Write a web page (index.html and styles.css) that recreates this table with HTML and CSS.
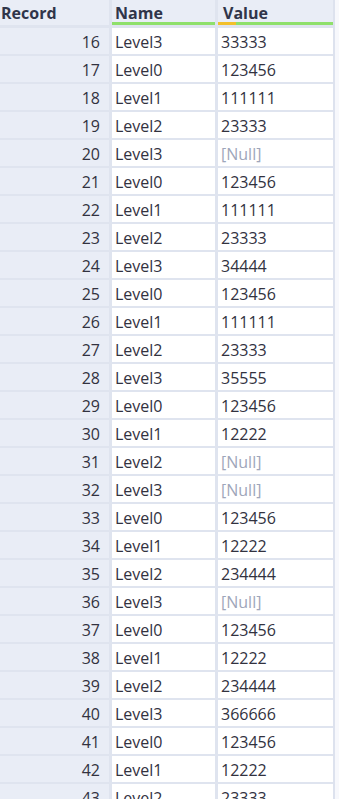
FILE: index.html
```html
<!DOCTYPE html>
<html>
<head>
<meta charset="utf-8">
<link rel="stylesheet" href="styles.css">
</head>
<body>
<div class="page">
  <div class="grid">
    <div class="hd rec">Record</div>
    <div class="hd name">Name</div>
    <div class="hd val">Value</div>

    <div class="c rec">16</div><div class="c">Level3</div><div class="c">33333</div>
    <div class="c rec">17</div><div class="c">Level0</div><div class="c">123456</div>
    <div class="c rec">18</div><div class="c">Level1</div><div class="c">111111</div>
    <div class="c rec">19</div><div class="c">Level2</div><div class="c">23333</div>
    <div class="c rec">20</div><div class="c">Level3</div><div class="c null">[Null]</div>
    <div class="c rec">21</div><div class="c">Level0</div><div class="c">123456</div>
    <div class="c rec">22</div><div class="c">Level1</div><div class="c">111111</div>
    <div class="c rec">23</div><div class="c">Level2</div><div class="c">23333</div>
    <div class="c rec">24</div><div class="c">Level3</div><div class="c">34444</div>
    <div class="c rec">25</div><div class="c">Level0</div><div class="c">123456</div>
    <div class="c rec">26</div><div class="c">Level1</div><div class="c">111111</div>
    <div class="c rec">27</div><div class="c">Level2</div><div class="c">23333</div>
    <div class="c rec">28</div><div class="c">Level3</div><div class="c">35555</div>
    <div class="c rec">29</div><div class="c">Level0</div><div class="c">123456</div>
    <div class="c rec">30</div><div class="c">Level1</div><div class="c">12222</div>
    <div class="c rec">31</div><div class="c">Level2</div><div class="c null">[Null]</div>
    <div class="c rec">32</div><div class="c">Level3</div><div class="c null">[Null]</div>
    <div class="c rec">33</div><div class="c">Level0</div><div class="c">123456</div>
    <div class="c rec">34</div><div class="c">Level1</div><div class="c">12222</div>
    <div class="c rec">35</div><div class="c">Level2</div><div class="c">234444</div>
    <div class="c rec">36</div><div class="c">Level3</div><div class="c null">[Null]</div>
    <div class="c rec">37</div><div class="c">Level0</div><div class="c">123456</div>
    <div class="c rec">38</div><div class="c">Level1</div><div class="c">12222</div>
    <div class="c rec">39</div><div class="c">Level2</div><div class="c">234444</div>
    <div class="c rec">40</div><div class="c">Level3</div><div class="c">366666</div>
    <div class="c rec">41</div><div class="c">Level0</div><div class="c">123456</div>
    <div class="c rec">42</div><div class="c">Level1</div><div class="c">12222</div>
    <div class="c rec">43</div><div class="c">Level2</div><div class="c">23333</div>
  </div>
  <div class="strip"></div>
</div>
</body>
</html>
```
FILE: styles.css
```css
html, body {
  margin: 0;
  padding: 0;
  background: #ffffff;
  overflow: hidden;
}
body {
  font-family: "Open Sans", "Noto Sans", sans-serif;
  font-size: 16px;
  color: #32323f;
}
.page {
  display: flex;
  height: 799px;
  overflow: hidden;
}
.grid {
  width: 333px;
  display: grid;
  grid-template-columns: 109px 103px 115px;
  column-gap: 3px;
  row-gap: 2px;
  align-content: start;
  background: #dfe4ef;
}
.strip {
  width: 6px;
  background: #f7f8fc;
  border-left: 2px solid #dde2ee;
}
.hd {
  height: 25px;
  box-sizing: border-box;
  margin-bottom: 1px;
  padding: 3px 0 0 3px;
  line-height: 20px;
  font-weight: 700;
  background: #e9edf6;
  color: #30354a;
}
.hd.rec {
  padding-left: 1px;
}
.hd.name {
  border-bottom: 3px solid #8fe06b;
}
.hd.val {
  padding-left: 5px;
  background-image: linear-gradient(to right, #f2c02c 0, #f2c02c 18px, #8fe06b 18px);
  background-size: 100% 3px;
  background-position: left bottom;
  background-repeat: no-repeat;
}
.c {
  height: 26px;
  box-sizing: border-box;
  padding: 4px 0 0 3px;
  line-height: 20px;
  background: #ffffff;
  white-space: nowrap;
}
.c.rec {
  background: #e9edf6;
  text-align: right;
  padding-right: 9px;
  padding-left: 0;
}
.c.null {
  color: #9ea6ba;
}
```
